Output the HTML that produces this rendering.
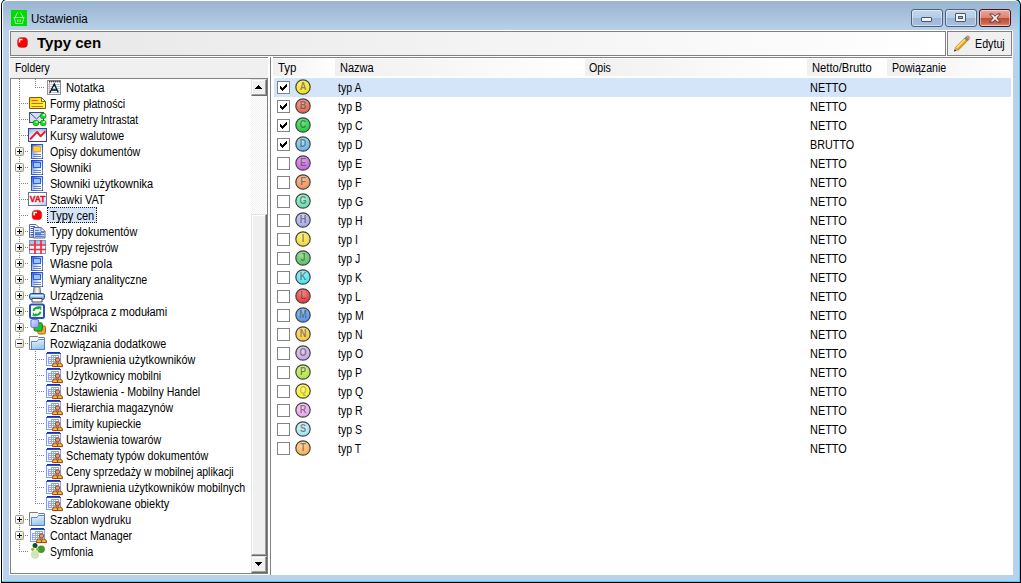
<!DOCTYPE html>
<html><head><meta charset="utf-8"><title>Ustawienia</title>
<style>
html,body{margin:0;padding:0}
body{width:1021px;height:583px;position:relative;overflow:hidden;background:#fff;font-family:"Liberation Sans",sans-serif;font-size:12px;color:#000}
div,span.t,svg{position:absolute;box-sizing:border-box}
svg{overflow:visible}
.t{white-space:nowrap;line-height:16px;transform-origin:0 50%;display:block}
.hl{height:1px;background:#828282}
.vd{width:1px;background:repeating-linear-gradient(to bottom,#808080 0,#808080 1px,transparent 1px,transparent 2px)}
.hd{height:1px;background:repeating-linear-gradient(to right,#808080 0,#808080 1px,transparent 1px,transparent 2px)}
.cb{width:13px;height:13px;border:1px solid #848484;background:#fff}
.hc{top:59px;height:17px;background:linear-gradient(to right,#f0f0f0,#fff)}
.ex{width:9px;height:9px;border:1px solid #919b81;border-radius:1.5px;background:linear-gradient(135deg,#fff 30%,#d6cfc0)}
.ex i{position:absolute;left:1px;top:3px;width:5px;height:1px;background:#000}
.ex b{position:absolute;left:3px;top:1px;width:1px;height:5px;background:#000}
.sb{width:16px;height:17px;background:#f0f0f0;border-left:1px solid #e3e3e3;border-top:1px solid #e3e3e3;border-right:1px solid #696969;border-bottom:1px solid #696969;box-shadow:inset -1px -1px 0 #a0a0a0,inset 1px 1px 0 #fff}
</style></head><body>
<div style="left:1px;top:-1px;width:1020px;height:584px;background:#000;border-radius:6px 6px 0 0"></div>
<div style="left:2px;top:0;width:1018px;height:582px;background:#48d0fc;border-radius:5px 5px 0 0"></div>
<div style="left:2px;top:0;width:1017px;height:581px;background:#fff;border-radius:5px 5px 0 0"></div>
<div style="left:3px;top:1px;width:1016px;height:580px;background:linear-gradient(to bottom,#99b4d1 0,#b9d1ea 30px,#b9d1ea 100%);border-radius:4px 4px 0 0"></div>
<svg style="left:11px;top:10px" width="16" height="16" viewBox="0 0 16 16"><rect width="16" height="16" fill="#00dc00"/><g fill="none" stroke="#9df59d" stroke-width="1"><path d="M2.5 7.5h11M3.5 8l1 5.5h7l1-5.5M4 7.5L6.5 2.5M12 7.5L9.500 2.500"/><path d="M6.500 9.500v2.500M8 9.500v2.500M9.500 9.500v2.500" stroke-width="0.9"/></g></svg>
<span class="t" style="left:31.4px;top:10.84px;font-size:12px;color:#000;transform:scaleX(0.9659);">Ustawienia</span>
<div style="left:911px;top:9px;width:32px;height:18px;border:1px solid #4f5f7d;border-radius:3px;background:linear-gradient(to bottom,#c3d6ec 0,#b6cde8 47%,#9bb7d8 50%,#a6c0df 100%);box-shadow:inset 0 0 0 1px rgba(255,255,255,.45)"><div style="left:9px;top:7px;width:11px;height:5px;border:1px solid #4a556f;border-radius:1px;background:#f4f4f4"></div></div>
<div style="left:945px;top:9px;width:32px;height:18px;border:1px solid #4f5f7d;border-radius:3px;background:linear-gradient(to bottom,#c3d6ec 0,#b6cde8 47%,#9bb7d8 50%,#a6c0df 100%);box-shadow:inset 0 0 0 1px rgba(255,255,255,.45)"><div style="left:9px;top:3px;width:11px;height:9px;border:1px solid #4a556f;border-radius:1px;background:#f4f4f4"><div style="left:2px;top:2px;width:5px;height:3px;border:1px solid #4a556f;background:#9db8d8"></div></div></div>
<div style="left:979px;top:9px;width:32px;height:18px;border:1px solid #431422;border-radius:3px;background:linear-gradient(to bottom,#e9a99c 0,#dc8474 47%,#c2482c 50%,#cb6a52 85%,#dc9585 100%);box-shadow:inset 0 0 0 1px rgba(255,255,255,.45)"><svg style="left:8px;top:3px" width="14" height="10" viewBox="0 0 14 10"><path d="M1.600 1h3.200L7 3.300 9.200 1h3.200L8.800 5l3.600 4H9.200L7 6.700 4.800 9H1.600L5.200 5z" fill="#f6f2f2" stroke="#633030" stroke-width="1" stroke-linejoin="round"/></svg></div>
<div style="left:9px;top:30px;width:1004px;height:545px;background:#fff"></div>
<div style="left:10px;top:31px;width:936px;height:25px;border:1px solid #808080;background:linear-gradient(to right,#e7e7e7,#ffffff)"></div>
<svg style="left:17px;top:37px" width="11" height="11" viewBox="0 0 11 11"><rect x="0.500" y="0.500" width="10" height="10" rx="3.500" fill="#ff0000" stroke="#8a3030" stroke-width="0.6" stroke-opacity=".6"/><path d="M1.800 5.500V1.800h3.700v1.400H3.200v2.300z" fill="#fff"/></svg>
<span class="t" style="left:37.0px;top:35.15px;font-size:14px;font-weight:bold;color:#000;transform:scaleX(1.0762);">Typy cen</span>
<div style="left:947px;top:31px;width:65px;height:25px;border:1px solid #808080;background:#f0f0f0"></div>
<svg style="left:953px;top:35px" width="18" height="18" viewBox="0 0 18 18"><path d="M1 16.600L2 13.200 4.400 15.600z" fill="#1a1a1a"/><path d="M1.700 14.200L2.400 12.400 5.200 15.200 3.400 15.900z" fill="#d9b380"/><path d="M2.400 12.400L11.600 3.200 14.400 6 5.200 15.200z" fill="#f0b02a" stroke="#b87a18" stroke-width=".8"/><path d="M3.300 13L12.300 4" stroke="#fbe38c" stroke-width="1.200"/><path d="M4.900 14.600L13.900 5.600" stroke="#d4901c" stroke-width="1"/><path d="M11.600 3.200l1.700-1.700 2.800 2.800-1.700 1.700z" fill="#6d9870" stroke="#4f7a55" stroke-width=".5"/><path d="M13.300 1.500l1-1q.5-.4 1 0l1.800 1.800q.4.500 0 1l-1 1z" fill="#ee7f86"/></svg>
<span class="t" style="left:975.4px;top:35.84px;font-size:12px;color:#000;transform:scaleX(0.8903);">Edytuj</span>
<div class="hl" style="left:10px;top:57px;width:258px"></div>
<div class="hl" style="left:273px;top:57px;width:739px"></div>
<div style="left:270px;top:57px;width:1px;height:518px;background:#808080"></div>
<div style="left:10px;top:59px;width:258px;height:19px;background:#f0f0f0"></div>
<span class="t" style="left:15.4px;top:59.84px;font-size:12px;color:#000;transform:scaleX(0.8647);">Foldery</span>
<div style="left:10px;top:78px;width:258px;height:496px;border:1px solid #828282;background:#fff"></div>
<svg width="0" height="0" style="left:0;top:0"><defs><linearGradient id="dg" x1="0" y1="0" x2="1" y2="1"><stop offset="0" stop-color="#1a3fb4"/><stop offset=".7" stop-color="#3f68d8"/><stop offset="1" stop-color="#8a96b4"/></linearGradient><linearGradient id="dw" x1="0" y1="0" x2="1" y2="1"><stop offset="0" stop-color="#2f66e6"/><stop offset=".75" stop-color="#ffffff"/></linearGradient><linearGradient id="fy" x1="0" y1="0" x2="1" y2="1"><stop offset="0" stop-color="#ffc61a"/><stop offset=".5" stop-color="#fff21a"/><stop offset="1" stop-color="#fff76a"/></linearGradient><radialGradient id="kg" cx=".55" cy=".8" r=".9"><stop offset="0" stop-color="#ffffff"/><stop offset=".45" stop-color="#f0f5ff"/><stop offset="1" stop-color="#8fa8ee"/></radialGradient><linearGradient id="vg" x1="0" y1="0" x2="1" y2="1"><stop offset=".55" stop-color="#ffffff"/><stop offset="1" stop-color="#a9c0f2"/></linearGradient><linearGradient id="pp" x1="0" y1="0" x2="1" y2="0"><stop offset="0" stop-color="#8a8a8a"/><stop offset=".5" stop-color="#ffffff"/><stop offset="1" stop-color="#9a9a9a"/></linearGradient><linearGradient id="mb" x1="0" y1="0" x2="1" y2="1"><stop offset="0" stop-color="#dfe4ff"/><stop offset="1" stop-color="#8f9cf0"/></linearGradient><linearGradient id="fg" x1="0" y1="0" x2="0.300" y2="1"><stop offset="0" stop-color="#f4faff"/><stop offset=".45" stop-color="#c4e2f8"/><stop offset="1" stop-color="#98c8ee"/></linearGradient><radialGradient id="gA" cx=".45" cy=".3" r=".75"><stop offset="0" stop-color="#fff27a"/><stop offset="1" stop-color="#f5d90e"/></radialGradient><radialGradient id="gB" cx=".45" cy=".3" r=".75"><stop offset="0" stop-color="#f8a898"/><stop offset="1" stop-color="#e05846"/></radialGradient><radialGradient id="gC" cx=".45" cy=".3" r=".75"><stop offset="0" stop-color="#6cec7e"/><stop offset="1" stop-color="#19c23a"/></radialGradient><radialGradient id="gD" cx=".45" cy=".3" r=".75"><stop offset="0" stop-color="#b0e0f8"/><stop offset="1" stop-color="#54aee2"/></radialGradient><radialGradient id="gE" cx=".45" cy=".3" r=".75"><stop offset="0" stop-color="#e9a2f2"/><stop offset="1" stop-color="#c05ada"/></radialGradient><radialGradient id="gF" cx=".45" cy=".3" r=".75"><stop offset="0" stop-color="#f8c4a0"/><stop offset="1" stop-color="#ea884c"/></radialGradient><radialGradient id="gG" cx=".45" cy=".3" r=".75"><stop offset="0" stop-color="#b0f4d8"/><stop offset="1" stop-color="#5adaa6"/></radialGradient><radialGradient id="gH" cx=".45" cy=".3" r=".75"><stop offset="0" stop-color="#d0d2f8"/><stop offset="1" stop-color="#a0a2e8"/></radialGradient><radialGradient id="gI" cx=".45" cy=".3" r=".75"><stop offset="0" stop-color="#fbf08a"/><stop offset="1" stop-color="#f0d629"/></radialGradient><radialGradient id="gJ" cx=".45" cy=".3" r=".75"><stop offset="0" stop-color="#9be29b"/><stop offset="1" stop-color="#4cbd5b"/></radialGradient><radialGradient id="gK" cx=".45" cy=".3" r=".75"><stop offset="0" stop-color="#a0f4f8"/><stop offset="1" stop-color="#3cdcec"/></radialGradient><radialGradient id="gL" cx=".45" cy=".3" r=".75"><stop offset="0" stop-color="#f78a8a"/><stop offset="1" stop-color="#e62a2a"/></radialGradient><radialGradient id="gM" cx=".45" cy=".3" r=".75"><stop offset="0" stop-color="#9ccaf8"/><stop offset="1" stop-color="#3f8ce8"/></radialGradient><radialGradient id="gN" cx=".45" cy=".3" r=".75"><stop offset="0" stop-color="#fde28a"/><stop offset="1" stop-color="#f8c42c"/></radialGradient><radialGradient id="gO" cx=".45" cy=".3" r=".75"><stop offset="0" stop-color="#e6d2f5"/><stop offset="1" stop-color="#c3a0e6"/></radialGradient><radialGradient id="gP" cx=".45" cy=".3" r=".75"><stop offset="0" stop-color="#dcf58a"/><stop offset="1" stop-color="#a6e23c"/></radialGradient><radialGradient id="gQ" cx=".45" cy=".3" r=".75"><stop offset="0" stop-color="#fff87a"/><stop offset="1" stop-color="#f5ee1e"/></radialGradient><radialGradient id="gR" cx=".45" cy=".3" r=".75"><stop offset="0" stop-color="#f8d0f8"/><stop offset="1" stop-color="#e89cea"/></radialGradient><radialGradient id="gS" cx=".45" cy=".3" r=".75"><stop offset="0" stop-color="#d4f6f8"/><stop offset="1" stop-color="#96e0ea"/></radialGradient><radialGradient id="gT" cx=".45" cy=".3" r=".75"><stop offset="0" stop-color="#fcd8a0"/><stop offset="1" stop-color="#f4aa44"/></radialGradient></defs></svg>
<div class="vd" style="left:19px;top:79px;height:473px"></div>
<div class="vd" style="left:35px;top:79px;height:9px"></div>
<div class="vd" style="left:35px;top:351px;height:153px"></div>
<div class="hd" style="left:37px;top:87px;width:8px"></div>
<svg style="left:45px;top:80px" width="18" height="16" viewBox="0 0 18 16"><rect x="2.500" y="0.500" width="13" height="14" fill="#fff" stroke="#8f8f8f"/><path d="M3 4.500h12M3 6.500h12M3 8.500h12M3 10.500h12M3 12.500h12" stroke="#a9cbf0" stroke-width="1"/><path d="M4.500 1v13" stroke="#f0a898" stroke-width="1"/><path d="M4 1l.75 1.500.75-1.500zM6 1l.75 1.500.75-1.500zM8 1l.75 1.500.75-1.500zM10 1l.75 1.500.75-1.500zM12 1l.75 1.500.75-1.500zM14 1l.5 1.500.5-1.500z" fill="#333" stroke="#333" stroke-width=".4"/><path d="M5 12.500L9.300 4l3.700 8M6.300 10h5.700" fill="none" stroke="#111" stroke-width="1.300" stroke-linecap="round"/></svg>
<span class="t" style="left:66.4px;top:79.84px;font-size:12px;color:#000;transform:scaleX(0.9333);">Notatka</span>
<div class="hd" style="left:21px;top:103px;width:8px"></div>
<svg style="left:29px;top:96px" width="18" height="16" viewBox="0 0 18 16"><path d="M0.500 1.500h12l4 4v7h-16z" fill="url(#fy)" stroke="#6f5f10"/><path d="M12.500 1.500v4h4z" fill="#fff" stroke="#6f5f10" stroke-width=".9"/><path d="M2.500 4.500h6.500M2.500 7.500h11.500M2.500 10.500h11.500" stroke="#f0581a" stroke-width="1"/></svg>
<span class="t" style="left:50.4px;top:95.84px;font-size:12px;color:#000;transform:scaleX(0.8878);">Formy płatności</span>
<div class="hd" style="left:21px;top:119px;width:8px"></div>
<svg style="left:29px;top:112px" width="18" height="16" viewBox="0 0 18 16"><rect x="0.500" y="0.500" width="14" height="10" fill="#d4e0fa" stroke="#3f4f80"/><path d="M0.500 0.500l7 6.500 7-6.500" fill="none" stroke="#3f4f80"/><rect x="11.500" y="1.400" width="5.400" height="5" rx="1.600" fill="#0ae80a" stroke="#0a8a0a" stroke-width=".7"/><rect x="4.200" y="8.500" width="5.400" height="5" rx="1.600" fill="#0ae80a" stroke="#0a8a0a" stroke-width=".7"/><rect x="11.500" y="8.500" width="5.400" height="5" rx="1.600" fill="#0ae80a" stroke="#0a8a0a" stroke-width=".7"/><rect x="13.800" y="2" width="2.200" height="2" rx=".6" fill="#e8ffe8"/><rect x="6.500" y="9.100" width="2.200" height="2" rx=".6" fill="#e8ffe8" fill-opacity=".8"/><rect x="13.800" y="9.100" width="2.200" height="2" rx=".6" fill="#e8ffe8"/></svg>
<span class="t" style="left:50.4px;top:111.84px;font-size:12px;color:#000;transform:scaleX(0.8643);">Parametry Intrastat</span>
<div class="hd" style="left:21px;top:135px;width:8px"></div>
<svg style="left:29px;top:128px" width="18" height="16" viewBox="0 0 18 16"><rect x="-.5" y="0.500" width="18" height="13" fill="url(#kg)" stroke="#36467a"/><path d="M1.600 10.700L8.100 3.900l3.400 4.300 4.300-4.300" fill="none" stroke="#ee1c24" stroke-width="2" stroke-linecap="round" stroke-linejoin="round"/></svg>
<span class="t" style="left:50.4px;top:127.84px;font-size:12px;color:#000;transform:scaleX(0.8828);">Kursy walutowe</span>
<div class="hd" style="left:25px;top:151px;width:4px"></div>
<div class="ex" style="left:15px;top:147px"><i></i><b></b></div>
<svg style="left:29px;top:144px" width="18" height="16" viewBox="0 0 18 16"><rect x="2" y="0" width="12" height="15" fill="url(#dg)"/><rect x="3" y="1" width="10" height="13" fill="url(#dw)"/><rect x="4" y="2" width="8" height="6" fill="#f5a81c"/><rect x="5" y="3" width="6" height="4" fill="#ffd23a"/><rect x="4" y="10" width="8" height="1" fill="#6a86c8"/><rect x="4" y="12" width="8" height="1" fill="#6a86c8"/><rect x="13" y="14" width="1" height="1" fill="#333"/></svg>
<span class="t" style="left:50.4px;top:143.84px;font-size:12px;color:#000;transform:scaleX(0.8839);">Opisy dokumentów</span>
<div class="hd" style="left:25px;top:167px;width:4px"></div>
<div class="ex" style="left:15px;top:163px"><i></i><b></b></div>
<svg style="left:29px;top:160px" width="18" height="16" viewBox="0 0 18 16"><rect x="2" y="0" width="12" height="15" fill="url(#dg)"/><rect x="3" y="1" width="10" height="13" fill="url(#dw)"/><rect x="4" y="2" width="8" height="6" fill="#2f62d8"/><rect x="5" y="3" width="6" height="4" fill="#9cc4f8"/><rect x="4" y="10" width="8" height="1" fill="#6a86c8"/><rect x="4" y="12" width="8" height="1" fill="#6a86c8"/><rect x="13" y="14" width="1" height="1" fill="#333"/></svg>
<span class="t" style="left:50.4px;top:159.84px;font-size:12px;color:#000;transform:scaleX(0.9360);">Słowniki</span>
<div class="hd" style="left:21px;top:183px;width:8px"></div>
<svg style="left:29px;top:176px" width="18" height="16" viewBox="0 0 18 16"><rect x="2" y="0" width="12" height="15" fill="url(#dg)"/><rect x="3" y="1" width="10" height="13" fill="url(#dw)"/><rect x="4" y="2" width="8" height="6" fill="#2f62d8"/><rect x="5" y="3" width="6" height="4" fill="#9cc4f8"/><rect x="4" y="10" width="8" height="1" fill="#6a86c8"/><rect x="4" y="12" width="8" height="1" fill="#6a86c8"/><rect x="13" y="14" width="1" height="1" fill="#333"/></svg>
<span class="t" style="left:50.4px;top:175.84px;font-size:12px;color:#000;transform:scaleX(0.9156);">Słowniki użytkownika</span>
<div class="hd" style="left:21px;top:199px;width:8px"></div>
<svg style="left:29px;top:192px" width="18" height="16" viewBox="0 0 18 16"><rect x="-.5" y="0.500" width="18" height="13" fill="url(#vg)" stroke="#66759f"/><text x="8.500" y="10.300" text-anchor="middle" font-family="Liberation Sans" font-weight="bold" font-size="9.600" fill="#e01020" stroke="#e01020" stroke-width=".45" textLength="15.500" lengthAdjust="spacingAndGlyphs">VAT</text></svg>
<span class="t" style="left:50.4px;top:191.84px;font-size:12px;color:#000;transform:scaleX(0.9081);">Stawki VAT</span>
<div class="hd" style="left:21px;top:215px;width:8px"></div>
<svg style="left:29px;top:208px" width="18" height="16" viewBox="0 0 18 16"><rect x="3.100" y="2.200" width="9.600" height="9.600" rx="3.500" fill="#ff0000" stroke="#a03030" stroke-width=".6" stroke-opacity=".6"/><path d="M4.400 7.400V3.800h3.600v1.400H5.900v2.200z" fill="#fff"/></svg>
<div style="left:47px;top:207px;width:50px;height:16px;background:#d4e5fa;border:1px dotted #1c1c1c"></div>
<span class="t" style="left:50.4px;top:207.84px;font-size:12px;color:#000;transform:scaleX(0.9202);">Typy cen</span>
<div class="hd" style="left:25px;top:231px;width:4px"></div>
<div class="ex" style="left:15px;top:227px"><i></i><b></b></div>
<svg style="left:29px;top:224px" width="18" height="16" viewBox="0 0 18 16"><path d="M0.500 0.500h6.500l3 3v10h-9.500z" fill="#f4f8ff" stroke="#5b6b9d"/><path d="M1.500 2.500h4.500M1.500 4.500h3M1.500 6.500h3M1.500 8.500h3M1.500 10.500h3M1.500 12h3" stroke="#3f63c4" stroke-width="1"/><path d="M4.500 3.500h7.500l4 4v6.500h-11.500z" fill="#cfdcf6" stroke="#5b6b9d"/><path d="M12 3.500v4h4z" fill="#fff" stroke="#5b6b9d" stroke-width=".8"/><path d="M6 6.500h4M6 8.500h9M6 10.500h9M6 12.500h9" stroke="#5f83d8" stroke-width="1.200"/><rect x="6" y="9" width="6" height="2.500" fill="#3f63c4" fill-opacity=".7"/></svg>
<span class="t" style="left:50.4px;top:223.84px;font-size:12px;color:#000;transform:scaleX(0.9016);">Typy dokumentów</span>
<div class="hd" style="left:25px;top:247px;width:4px"></div>
<div class="ex" style="left:15px;top:243px"><i></i><b></b></div>
<svg style="left:29px;top:240px" width="18" height="16" viewBox="0 0 18 16"><rect x="0.500" y="0.500" width="16" height="13" fill="#eef4ff" stroke="#8494c4"/><rect x="1" y="1" width="15" height="3.500" fill="#a6c4f4"/><path d="M0 5h17M0 9.500h17M6 0v14M12 0v14" stroke="#ea3038" stroke-width="1.700"/></svg>
<span class="t" style="left:50.4px;top:239.84px;font-size:12px;color:#000;transform:scaleX(0.8816);">Typy rejestrów</span>
<div class="hd" style="left:25px;top:263px;width:4px"></div>
<div class="ex" style="left:15px;top:259px"><i></i><b></b></div>
<svg style="left:29px;top:256px" width="18" height="16" viewBox="0 0 18 16"><rect x="2" y="0" width="12" height="15" fill="url(#dg)"/><rect x="3" y="1" width="10" height="13" fill="url(#dw)"/><rect x="4" y="2" width="8" height="6" fill="#2f62d8"/><rect x="5" y="3" width="6" height="4" fill="#9cc4f8"/><rect x="4" y="10" width="8" height="1" fill="#6a86c8"/><rect x="4" y="12" width="8" height="1" fill="#6a86c8"/><rect x="13" y="14" width="1" height="1" fill="#333"/></svg>
<span class="t" style="left:50.4px;top:255.84px;font-size:12px;color:#000;transform:scaleX(0.9418);">Własne pola</span>
<div class="hd" style="left:25px;top:279px;width:4px"></div>
<div class="ex" style="left:15px;top:275px"><i></i><b></b></div>
<svg style="left:29px;top:272px" width="18" height="16" viewBox="0 0 18 16"><rect x="2" y="0" width="12" height="15" fill="url(#dg)"/><rect x="3" y="1" width="10" height="13" fill="url(#dw)"/><rect x="4" y="2" width="8" height="6" fill="#2f62d8"/><rect x="5" y="3" width="6" height="4" fill="#9cc4f8"/><rect x="4" y="10" width="8" height="1" fill="#6a86c8"/><rect x="4" y="12" width="8" height="1" fill="#6a86c8"/><rect x="13" y="14" width="1" height="1" fill="#333"/></svg>
<span class="t" style="left:50.4px;top:271.84px;font-size:12px;color:#000;transform:scaleX(0.8843);">Wymiary analityczne</span>
<div class="hd" style="left:25px;top:295px;width:4px"></div>
<div class="ex" style="left:15px;top:291px"><i></i><b></b></div>
<svg style="left:29px;top:288px" width="18" height="16" viewBox="0 0 18 16"><path d="M5 -1h6l.8 7H4.200z" fill="url(#pp)" stroke="#6a6a6a" stroke-width=".8"/><rect x="0.500" y="5.500" width="15" height="6" rx="2" fill="#7fb0ee" stroke="#26488f"/><rect x="2" y="7" width="12" height="1.600" fill="#e4f0ff"/><path d="M3 10.500h10v3.500H3z" fill="#fff" stroke="#333" stroke-width=".9"/></svg>
<span class="t" style="left:50.4px;top:287.84px;font-size:12px;color:#000;transform:scaleX(0.8764);">Urządzenia</span>
<div class="hd" style="left:25px;top:311px;width:4px"></div>
<div class="ex" style="left:15px;top:307px"><i></i><b></b></div>
<svg style="left:29px;top:304px" width="18" height="16" viewBox="0 0 18 16"><rect x="1" y="0.600" width="14" height="13.400" rx="1.800" fill="#fff" stroke="#2f4fbf" stroke-width="2"/><path d="M4.600 7A3.600 3.600 0 0 1 10.300 4.400" fill="none" stroke="#12b032" stroke-width="2.100"/><path d="M9 2.400l3.200 .4-.4 3.200z" fill="#12b032" stroke="#12b032" stroke-width=".5"/><path d="M11.400 7.600A3.600 3.600 0 0 1 5.700 10.200" fill="none" stroke="#12b032" stroke-width="2.100"/><path d="M7 12.200l-3.200-.4 .4-3.200z" fill="#12b032" stroke="#12b032" stroke-width=".5"/></svg>
<span class="t" style="left:50.4px;top:303.84px;font-size:12px;color:#000;transform:scaleX(0.9153);">Współpraca z modułami</span>
<div class="hd" style="left:25px;top:327px;width:4px"></div>
<div class="ex" style="left:15px;top:323px"><i></i><b></b></div>
<svg style="left:29px;top:320px" width="18" height="16" viewBox="0 0 18 16"><rect x="8.900" y="6" width="7.600" height="8" rx="1.500" fill="#f7a43a" stroke="#b8600a"/><rect x="5" y="2.800" width="8.300" height="8.200" rx="1.600" fill="#18cc26" stroke="#0a7a12"/><rect x="1.900" y="-.4" width="7.800" height="7.800" rx="1.500" fill="url(#mb)" stroke="#5f6fcf"/></svg>
<span class="t" style="left:50.4px;top:319.84px;font-size:12px;color:#000;transform:scaleX(0.9312);">Znaczniki</span>
<div class="hd" style="left:25px;top:343px;width:4px"></div>
<div class="ex" style="left:15px;top:339px"><i></i></div>
<svg style="left:29px;top:336px" width="18" height="16" viewBox="0 0 18 16"><path d="M0.500 13.500V0.500h8l1 1h6v12z" fill="#f6f6f6" stroke="#7c7c7c"/><path d="M2.500 5.500h5.500l1.500-2h6v10h-13z" fill="url(#fg)" stroke="#5474c6" stroke-width=".9" stroke-linejoin="round"/></svg>
<span class="t" style="left:50.4px;top:335.84px;font-size:12px;color:#000;transform:scaleX(0.8978);">Rozwiązania dodatkowe</span>
<div class="hd" style="left:37px;top:359px;width:8px"></div>
<svg style="left:45px;top:352px" width="18" height="16" viewBox="0 0 18 16"><rect x="1.500" y="1.500" width="14" height="12" fill="#f6f8ff" stroke="#7f9cf2"/><rect x="2" y="0" width="13" height="1" fill="#1a2fa0"/><rect x="1" y="1" width="15" height="1" fill="#2a52d2"/><rect x="6" y="3" width="8" height="9" fill="#8ea4f2"/><rect x="3" y="5" width="3.200" height="7" fill="#8ea4f2"/><g fill="#fff"><rect x="4" y="6" width="2" height="1"/><rect x="7" y="6" width="1.200" height="1"/><rect x="9" y="6" width="1.200" height="1"/><rect x="4" y="8" width="2" height="1"/><rect x="7" y="8" width="1.200" height="1"/><rect x="9" y="8" width="1.200" height="1"/><rect x="4" y="10" width="2" height="1"/><rect x="7" y="10" width="1.200" height="1"/><rect x="9" y="10" width="1.200" height="1"/><rect x="7" y="4" width="1.200" height="1"/><rect x="9" y="4" width="1.200" height="1"/><rect x="11" y="4" width="2" height="1"/></g><path d="M7.500 14.600c-.2-2.200 1.100-3.700 2.700-3.700l2.300 1.300 2.300-1.300c1.600 0 2.900 1.500 2.700 3.700z" fill="#f4bc1a" stroke="#96280e" stroke-width=".9" stroke-linejoin="round"/><path d="M12.500 12.300v2.300" stroke="#96280e" stroke-width=".9"/><circle cx="12.550" cy="7.900" r="2.150" fill="#dfa45e" stroke="#8c4a16" stroke-width="1"/></svg>
<span class="t" style="left:66.4px;top:351.84px;font-size:12px;color:#000;transform:scaleX(0.8967);">Uprawnienia użytkowników</span>
<div class="hd" style="left:37px;top:375px;width:8px"></div>
<svg style="left:45px;top:368px" width="18" height="16" viewBox="0 0 18 16"><rect x="1.500" y="1.500" width="14" height="12" fill="#f6f8ff" stroke="#7f9cf2"/><rect x="2" y="0" width="13" height="1" fill="#1a2fa0"/><rect x="1" y="1" width="15" height="1" fill="#2a52d2"/><rect x="6" y="3" width="8" height="9" fill="#8ea4f2"/><rect x="3" y="5" width="3.200" height="7" fill="#8ea4f2"/><g fill="#fff"><rect x="4" y="6" width="2" height="1"/><rect x="7" y="6" width="1.200" height="1"/><rect x="9" y="6" width="1.200" height="1"/><rect x="4" y="8" width="2" height="1"/><rect x="7" y="8" width="1.200" height="1"/><rect x="9" y="8" width="1.200" height="1"/><rect x="4" y="10" width="2" height="1"/><rect x="7" y="10" width="1.200" height="1"/><rect x="9" y="10" width="1.200" height="1"/><rect x="7" y="4" width="1.200" height="1"/><rect x="9" y="4" width="1.200" height="1"/><rect x="11" y="4" width="2" height="1"/></g><path d="M7.500 14.600c-.2-2.200 1.100-3.700 2.700-3.700l2.300 1.300 2.300-1.300c1.600 0 2.900 1.500 2.700 3.700z" fill="#f4bc1a" stroke="#96280e" stroke-width=".9" stroke-linejoin="round"/><path d="M12.500 12.300v2.300" stroke="#96280e" stroke-width=".9"/><circle cx="12.550" cy="7.900" r="2.150" fill="#dfa45e" stroke="#8c4a16" stroke-width="1"/></svg>
<span class="t" style="left:66.4px;top:367.84px;font-size:12px;color:#000;transform:scaleX(0.8812);">Użytkownicy mobilni</span>
<div class="hd" style="left:37px;top:391px;width:8px"></div>
<svg style="left:45px;top:384px" width="18" height="16" viewBox="0 0 18 16"><rect x="1.500" y="1.500" width="14" height="12" fill="#f6f8ff" stroke="#7f9cf2"/><rect x="2" y="0" width="13" height="1" fill="#1a2fa0"/><rect x="1" y="1" width="15" height="1" fill="#2a52d2"/><rect x="6" y="3" width="8" height="9" fill="#8ea4f2"/><rect x="3" y="5" width="3.200" height="7" fill="#8ea4f2"/><g fill="#fff"><rect x="4" y="6" width="2" height="1"/><rect x="7" y="6" width="1.200" height="1"/><rect x="9" y="6" width="1.200" height="1"/><rect x="4" y="8" width="2" height="1"/><rect x="7" y="8" width="1.200" height="1"/><rect x="9" y="8" width="1.200" height="1"/><rect x="4" y="10" width="2" height="1"/><rect x="7" y="10" width="1.200" height="1"/><rect x="9" y="10" width="1.200" height="1"/><rect x="7" y="4" width="1.200" height="1"/><rect x="9" y="4" width="1.200" height="1"/><rect x="11" y="4" width="2" height="1"/></g><path d="M7.500 14.600c-.2-2.200 1.100-3.700 2.700-3.700l2.300 1.300 2.300-1.300c1.600 0 2.900 1.500 2.700 3.700z" fill="#f4bc1a" stroke="#96280e" stroke-width=".9" stroke-linejoin="round"/><path d="M12.500 12.300v2.300" stroke="#96280e" stroke-width=".9"/><circle cx="12.550" cy="7.900" r="2.150" fill="#dfa45e" stroke="#8c4a16" stroke-width="1"/></svg>
<span class="t" style="left:66.4px;top:383.84px;font-size:12px;color:#000;transform:scaleX(0.8824);">Ustawienia - Mobilny Handel</span>
<div class="hd" style="left:37px;top:407px;width:8px"></div>
<svg style="left:45px;top:400px" width="18" height="16" viewBox="0 0 18 16"><rect x="1.500" y="1.500" width="14" height="12" fill="#f6f8ff" stroke="#7f9cf2"/><rect x="2" y="0" width="13" height="1" fill="#1a2fa0"/><rect x="1" y="1" width="15" height="1" fill="#2a52d2"/><rect x="6" y="3" width="8" height="9" fill="#8ea4f2"/><rect x="3" y="5" width="3.200" height="7" fill="#8ea4f2"/><g fill="#fff"><rect x="4" y="6" width="2" height="1"/><rect x="7" y="6" width="1.200" height="1"/><rect x="9" y="6" width="1.200" height="1"/><rect x="4" y="8" width="2" height="1"/><rect x="7" y="8" width="1.200" height="1"/><rect x="9" y="8" width="1.200" height="1"/><rect x="4" y="10" width="2" height="1"/><rect x="7" y="10" width="1.200" height="1"/><rect x="9" y="10" width="1.200" height="1"/><rect x="7" y="4" width="1.200" height="1"/><rect x="9" y="4" width="1.200" height="1"/><rect x="11" y="4" width="2" height="1"/></g><path d="M7.500 14.600c-.2-2.200 1.100-3.700 2.700-3.700l2.300 1.300 2.300-1.300c1.600 0 2.900 1.500 2.700 3.700z" fill="#f4bc1a" stroke="#96280e" stroke-width=".9" stroke-linejoin="round"/><path d="M12.500 12.300v2.300" stroke="#96280e" stroke-width=".9"/><circle cx="12.550" cy="7.900" r="2.150" fill="#dfa45e" stroke="#8c4a16" stroke-width="1"/></svg>
<span class="t" style="left:66.4px;top:399.84px;font-size:12px;color:#000;transform:scaleX(0.8782);">Hierarchia magazynów</span>
<div class="hd" style="left:37px;top:423px;width:8px"></div>
<svg style="left:45px;top:416px" width="18" height="16" viewBox="0 0 18 16"><rect x="1.500" y="1.500" width="14" height="12" fill="#f6f8ff" stroke="#7f9cf2"/><rect x="2" y="0" width="13" height="1" fill="#1a2fa0"/><rect x="1" y="1" width="15" height="1" fill="#2a52d2"/><rect x="6" y="3" width="8" height="9" fill="#8ea4f2"/><rect x="3" y="5" width="3.200" height="7" fill="#8ea4f2"/><g fill="#fff"><rect x="4" y="6" width="2" height="1"/><rect x="7" y="6" width="1.200" height="1"/><rect x="9" y="6" width="1.200" height="1"/><rect x="4" y="8" width="2" height="1"/><rect x="7" y="8" width="1.200" height="1"/><rect x="9" y="8" width="1.200" height="1"/><rect x="4" y="10" width="2" height="1"/><rect x="7" y="10" width="1.200" height="1"/><rect x="9" y="10" width="1.200" height="1"/><rect x="7" y="4" width="1.200" height="1"/><rect x="9" y="4" width="1.200" height="1"/><rect x="11" y="4" width="2" height="1"/></g><path d="M7.500 14.600c-.2-2.200 1.100-3.700 2.700-3.700l2.300 1.300 2.300-1.300c1.600 0 2.900 1.500 2.700 3.700z" fill="#f4bc1a" stroke="#96280e" stroke-width=".9" stroke-linejoin="round"/><path d="M12.500 12.300v2.300" stroke="#96280e" stroke-width=".9"/><circle cx="12.550" cy="7.900" r="2.150" fill="#dfa45e" stroke="#8c4a16" stroke-width="1"/></svg>
<span class="t" style="left:66.4px;top:415.84px;font-size:12px;color:#000;transform:scaleX(0.8878);">Limity kupieckie</span>
<div class="hd" style="left:37px;top:439px;width:8px"></div>
<svg style="left:45px;top:432px" width="18" height="16" viewBox="0 0 18 16"><rect x="1.500" y="1.500" width="14" height="12" fill="#f6f8ff" stroke="#7f9cf2"/><rect x="2" y="0" width="13" height="1" fill="#1a2fa0"/><rect x="1" y="1" width="15" height="1" fill="#2a52d2"/><rect x="6" y="3" width="8" height="9" fill="#8ea4f2"/><rect x="3" y="5" width="3.200" height="7" fill="#8ea4f2"/><g fill="#fff"><rect x="4" y="6" width="2" height="1"/><rect x="7" y="6" width="1.200" height="1"/><rect x="9" y="6" width="1.200" height="1"/><rect x="4" y="8" width="2" height="1"/><rect x="7" y="8" width="1.200" height="1"/><rect x="9" y="8" width="1.200" height="1"/><rect x="4" y="10" width="2" height="1"/><rect x="7" y="10" width="1.200" height="1"/><rect x="9" y="10" width="1.200" height="1"/><rect x="7" y="4" width="1.200" height="1"/><rect x="9" y="4" width="1.200" height="1"/><rect x="11" y="4" width="2" height="1"/></g><path d="M7.500 14.600c-.2-2.200 1.100-3.700 2.700-3.700l2.300 1.300 2.300-1.300c1.600 0 2.900 1.500 2.700 3.700z" fill="#f4bc1a" stroke="#96280e" stroke-width=".9" stroke-linejoin="round"/><path d="M12.500 12.300v2.300" stroke="#96280e" stroke-width=".9"/><circle cx="12.550" cy="7.900" r="2.150" fill="#dfa45e" stroke="#8c4a16" stroke-width="1"/></svg>
<span class="t" style="left:66.4px;top:431.84px;font-size:12px;color:#000;transform:scaleX(0.8921);">Ustawienia towarów</span>
<div class="hd" style="left:37px;top:455px;width:8px"></div>
<svg style="left:45px;top:448px" width="18" height="16" viewBox="0 0 18 16"><rect x="1.500" y="1.500" width="14" height="12" fill="#f6f8ff" stroke="#7f9cf2"/><rect x="2" y="0" width="13" height="1" fill="#1a2fa0"/><rect x="1" y="1" width="15" height="1" fill="#2a52d2"/><rect x="6" y="3" width="8" height="9" fill="#8ea4f2"/><rect x="3" y="5" width="3.200" height="7" fill="#8ea4f2"/><g fill="#fff"><rect x="4" y="6" width="2" height="1"/><rect x="7" y="6" width="1.200" height="1"/><rect x="9" y="6" width="1.200" height="1"/><rect x="4" y="8" width="2" height="1"/><rect x="7" y="8" width="1.200" height="1"/><rect x="9" y="8" width="1.200" height="1"/><rect x="4" y="10" width="2" height="1"/><rect x="7" y="10" width="1.200" height="1"/><rect x="9" y="10" width="1.200" height="1"/><rect x="7" y="4" width="1.200" height="1"/><rect x="9" y="4" width="1.200" height="1"/><rect x="11" y="4" width="2" height="1"/></g><path d="M7.500 14.600c-.2-2.200 1.100-3.700 2.700-3.700l2.300 1.300 2.300-1.300c1.600 0 2.900 1.500 2.700 3.700z" fill="#f4bc1a" stroke="#96280e" stroke-width=".9" stroke-linejoin="round"/><path d="M12.500 12.300v2.300" stroke="#96280e" stroke-width=".9"/><circle cx="12.550" cy="7.900" r="2.150" fill="#dfa45e" stroke="#8c4a16" stroke-width="1"/></svg>
<span class="t" style="left:66.4px;top:447.84px;font-size:12px;color:#000;transform:scaleX(0.8920);">Schematy typów dokumentów</span>
<div class="hd" style="left:37px;top:471px;width:8px"></div>
<svg style="left:45px;top:464px" width="18" height="16" viewBox="0 0 18 16"><rect x="1.500" y="1.500" width="14" height="12" fill="#f6f8ff" stroke="#7f9cf2"/><rect x="2" y="0" width="13" height="1" fill="#1a2fa0"/><rect x="1" y="1" width="15" height="1" fill="#2a52d2"/><rect x="6" y="3" width="8" height="9" fill="#8ea4f2"/><rect x="3" y="5" width="3.200" height="7" fill="#8ea4f2"/><g fill="#fff"><rect x="4" y="6" width="2" height="1"/><rect x="7" y="6" width="1.200" height="1"/><rect x="9" y="6" width="1.200" height="1"/><rect x="4" y="8" width="2" height="1"/><rect x="7" y="8" width="1.200" height="1"/><rect x="9" y="8" width="1.200" height="1"/><rect x="4" y="10" width="2" height="1"/><rect x="7" y="10" width="1.200" height="1"/><rect x="9" y="10" width="1.200" height="1"/><rect x="7" y="4" width="1.200" height="1"/><rect x="9" y="4" width="1.200" height="1"/><rect x="11" y="4" width="2" height="1"/></g><path d="M7.500 14.600c-.2-2.200 1.100-3.700 2.700-3.700l2.300 1.300 2.300-1.300c1.600 0 2.900 1.500 2.700 3.700z" fill="#f4bc1a" stroke="#96280e" stroke-width=".9" stroke-linejoin="round"/><path d="M12.500 12.300v2.300" stroke="#96280e" stroke-width=".9"/><circle cx="12.550" cy="7.900" r="2.150" fill="#dfa45e" stroke="#8c4a16" stroke-width="1"/></svg>
<span class="t" style="left:66.4px;top:463.84px;font-size:12px;color:#000;transform:scaleX(0.8730);">Ceny sprzedaży w mobilnej aplikacji</span>
<div class="hd" style="left:37px;top:487px;width:8px"></div>
<svg style="left:45px;top:480px" width="18" height="16" viewBox="0 0 18 16"><rect x="1.500" y="1.500" width="14" height="12" fill="#f6f8ff" stroke="#7f9cf2"/><rect x="2" y="0" width="13" height="1" fill="#1a2fa0"/><rect x="1" y="1" width="15" height="1" fill="#2a52d2"/><rect x="6" y="3" width="8" height="9" fill="#8ea4f2"/><rect x="3" y="5" width="3.200" height="7" fill="#8ea4f2"/><g fill="#fff"><rect x="4" y="6" width="2" height="1"/><rect x="7" y="6" width="1.200" height="1"/><rect x="9" y="6" width="1.200" height="1"/><rect x="4" y="8" width="2" height="1"/><rect x="7" y="8" width="1.200" height="1"/><rect x="9" y="8" width="1.200" height="1"/><rect x="4" y="10" width="2" height="1"/><rect x="7" y="10" width="1.200" height="1"/><rect x="9" y="10" width="1.200" height="1"/><rect x="7" y="4" width="1.200" height="1"/><rect x="9" y="4" width="1.200" height="1"/><rect x="11" y="4" width="2" height="1"/></g><path d="M7.500 14.600c-.2-2.200 1.100-3.700 2.700-3.700l2.300 1.300 2.300-1.300c1.600 0 2.900 1.500 2.700 3.700z" fill="#f4bc1a" stroke="#96280e" stroke-width=".9" stroke-linejoin="round"/><path d="M12.500 12.300v2.300" stroke="#96280e" stroke-width=".9"/><circle cx="12.550" cy="7.900" r="2.150" fill="#dfa45e" stroke="#8c4a16" stroke-width="1"/></svg>
<span class="t" style="left:66.4px;top:479.84px;font-size:12px;color:#000;transform:scaleX(0.8897);">Uprawnienia użytkowników mobilnych</span>
<div class="hd" style="left:37px;top:503px;width:8px"></div>
<svg style="left:45px;top:496px" width="18" height="16" viewBox="0 0 18 16"><rect x="1.500" y="1.500" width="14" height="12" fill="#f6f8ff" stroke="#7f9cf2"/><rect x="2" y="0" width="13" height="1" fill="#1a2fa0"/><rect x="1" y="1" width="15" height="1" fill="#2a52d2"/><rect x="6" y="3" width="8" height="9" fill="#8ea4f2"/><rect x="3" y="5" width="3.200" height="7" fill="#8ea4f2"/><g fill="#fff"><rect x="4" y="6" width="2" height="1"/><rect x="7" y="6" width="1.200" height="1"/><rect x="9" y="6" width="1.200" height="1"/><rect x="4" y="8" width="2" height="1"/><rect x="7" y="8" width="1.200" height="1"/><rect x="9" y="8" width="1.200" height="1"/><rect x="4" y="10" width="2" height="1"/><rect x="7" y="10" width="1.200" height="1"/><rect x="9" y="10" width="1.200" height="1"/><rect x="7" y="4" width="1.200" height="1"/><rect x="9" y="4" width="1.200" height="1"/><rect x="11" y="4" width="2" height="1"/></g><path d="M7.500 14.600c-.2-2.200 1.100-3.700 2.700-3.700l2.300 1.300 2.300-1.300c1.600 0 2.900 1.500 2.700 3.700z" fill="#f4bc1a" stroke="#96280e" stroke-width=".9" stroke-linejoin="round"/><path d="M12.500 12.300v2.300" stroke="#96280e" stroke-width=".9"/><circle cx="12.550" cy="7.900" r="2.150" fill="#dfa45e" stroke="#8c4a16" stroke-width="1"/></svg>
<span class="t" style="left:66.4px;top:495.84px;font-size:12px;color:#000;transform:scaleX(0.9154);">Zablokowane obiekty</span>
<div class="hd" style="left:25px;top:519px;width:4px"></div>
<div class="ex" style="left:15px;top:515px"><i></i><b></b></div>
<svg style="left:29px;top:512px" width="18" height="16" viewBox="0 0 18 16"><path d="M0.500 13.500V0.500h8l1 1h6v12z" fill="#f6f6f6" stroke="#7c7c7c"/><path d="M2.500 5.500h5.500l1.500-2h6v10h-13z" fill="url(#fg)" stroke="#5474c6" stroke-width=".9" stroke-linejoin="round"/></svg>
<span class="t" style="left:50.4px;top:511.84px;font-size:12px;color:#000;transform:scaleX(0.8885);">Szablon wydruku</span>
<div class="hd" style="left:25px;top:535px;width:4px"></div>
<div class="ex" style="left:15px;top:531px"><i></i><b></b></div>
<svg style="left:29px;top:528px" width="18" height="16" viewBox="0 0 18 16"><rect x="1.500" y="1.500" width="14" height="12" fill="#f6f8ff" stroke="#7f9cf2"/><rect x="2" y="0" width="13" height="1" fill="#1a2fa0"/><rect x="1" y="1" width="15" height="1" fill="#2a52d2"/><rect x="6" y="3" width="8" height="9" fill="#8ea4f2"/><rect x="3" y="5" width="3.200" height="7" fill="#8ea4f2"/><g fill="#fff"><rect x="4" y="6" width="2" height="1"/><rect x="7" y="6" width="1.200" height="1"/><rect x="9" y="6" width="1.200" height="1"/><rect x="4" y="8" width="2" height="1"/><rect x="7" y="8" width="1.200" height="1"/><rect x="9" y="8" width="1.200" height="1"/><rect x="4" y="10" width="2" height="1"/><rect x="7" y="10" width="1.200" height="1"/><rect x="9" y="10" width="1.200" height="1"/><rect x="7" y="4" width="1.200" height="1"/><rect x="9" y="4" width="1.200" height="1"/><rect x="11" y="4" width="2" height="1"/></g><path d="M7.500 14.600c-.2-2.200 1.100-3.700 2.700-3.700l2.300 1.300 2.300-1.300c1.600 0 2.900 1.500 2.700 3.700z" fill="#f4bc1a" stroke="#96280e" stroke-width=".9" stroke-linejoin="round"/><path d="M12.500 12.300v2.300" stroke="#96280e" stroke-width=".9"/><circle cx="12.550" cy="7.900" r="2.150" fill="#dfa45e" stroke="#8c4a16" stroke-width="1"/></svg>
<span class="t" style="left:50.4px;top:527.84px;font-size:12px;color:#000;transform:scaleX(0.8929);">Contact Manager</span>
<div class="hd" style="left:21px;top:551px;width:8px"></div>
<svg style="left:29px;top:544px" width="18" height="16" viewBox="0 0 18 16"><circle cx="6.050" cy="10.700" r="4.100" fill="#cde6bb"/><circle cx="12.200" cy="5.300" r="3.700" fill="#4a9636"/><circle cx="6.050" cy="1.600" r="2.500" fill="#0c522a"/><circle cx="3.600" cy="5.300" r="1.600" fill="#9cbc2a"/><circle cx="8.500" cy="5.300" r="1.500" fill="#93b82c"/></svg>
<span class="t" style="left:50.4px;top:543.84px;font-size:12px;color:#000;transform:scaleX(0.8635);">Symfonia</span>
<div style="left:251px;top:79px;width:16px;height:494px;background:repeating-conic-gradient(#fff 0 25%,#f0f0f0 0 50%) 0 0/2px 2px"></div>
<div class="sb" style="left:251px;top:79px"><svg style="left:3px;top:5px" width="7" height="4" viewBox="0 0 7 4" shape-rendering="crispEdges"><path d="M3 0h1v1H3zM2 1h3v1H2zM1 2h5v1H1zM0 3h7v1H0z" fill="#000"/></svg></div>
<div class="sb" style="left:251px;top:556px"><svg style="left:3px;top:5px" width="7" height="4" viewBox="0 0 7 4" shape-rendering="crispEdges"><path d="M0 0h7v1H0zM1 1h5v1H1zM2 2h3v1H2zM3 3h1v1H3z" fill="#000"/></svg></div>
<div class="sb" style="left:251px;top:214px;height:342px"></div>
<div class="hc" style="left:273px;width:61px"></div>
<span class="t" style="left:278.4px;top:59.84px;font-size:12px;color:#000;transform:scaleX(0.9538);">Typ</span>
<div class="hc" style="left:335px;width:249px"></div>
<span class="t" style="left:340.4px;top:59.84px;font-size:12px;color:#000;transform:scaleX(0.9186);">Nazwa</span>
<div class="hc" style="left:585px;width:220px"></div>
<span class="t" style="left:589.4px;top:59.84px;font-size:12px;color:#000;transform:scaleX(0.8850);">Opis</span>
<div class="hc" style="left:807px;width:79px"></div>
<span class="t" style="left:811.9px;top:59.84px;font-size:12px;color:#000;transform:scaleX(0.9308);">Netto/Brutto</span>
<div class="hc" style="left:887px;width:125px"></div>
<span class="t" style="left:892.4px;top:59.84px;font-size:12px;color:#000;transform:scaleX(0.8831);">Powiązanie</span>
<div style="left:274px;top:78px;width:737px;height:19px;background:#d4e5fa"></div>
<div class="cb" style="left:277px;top:81px"><svg style="left:2px;top:2px" width="7" height="7" viewBox="0 0 7 7" shape-rendering="crispEdges"><path d="M0 2h1v3H0zM1 3h1v3H1zM2 4h1v3H2zM3 3h1v3H3zM4 2h1v3H4zM5 1h1v3H5zM6 0h1v3H6z" fill="#000"/></svg></div>
<svg style="left:295px;top:79px" width="16" height="16" viewBox="0 0 16 16"><circle cx="8" cy="8" r="7.200" fill="url(#gA)" stroke="#444" stroke-width="1.200"/><text x="8" y="11.500" text-anchor="middle" font-family="Liberation Sans" font-weight="bold" font-size="10.200" fill="#404040" fill-opacity=".6" transform="translate(8 0) scale(.9 1) translate(-8 0)">A</text></svg>
<span class="t" style="left:338.4px;top:79.84px;font-size:12px;color:#000;transform:scaleX(0.8770);">typ A</span>
<span class="t" style="left:810.4px;top:79.84px;font-size:12px;color:#000;transform:scaleX(0.9097);">NETTO</span>
<div class="cb" style="left:277px;top:100px"><svg style="left:2px;top:2px" width="7" height="7" viewBox="0 0 7 7" shape-rendering="crispEdges"><path d="M0 2h1v3H0zM1 3h1v3H1zM2 4h1v3H2zM3 3h1v3H3zM4 2h1v3H4zM5 1h1v3H5zM6 0h1v3H6z" fill="#000"/></svg></div>
<svg style="left:295px;top:98px" width="16" height="16" viewBox="0 0 16 16"><circle cx="8" cy="8" r="7.200" fill="url(#gB)" stroke="#444" stroke-width="1.200"/><text x="8" y="11.500" text-anchor="middle" font-family="Liberation Sans" font-weight="bold" font-size="10.200" fill="#404040" fill-opacity=".6" transform="translate(8 0) scale(.9 1) translate(-8 0)">B</text></svg>
<span class="t" style="left:338.4px;top:98.84px;font-size:12px;color:#000;transform:scaleX(0.8770);">typ B</span>
<span class="t" style="left:810.4px;top:98.84px;font-size:12px;color:#000;transform:scaleX(0.9097);">NETTO</span>
<div class="cb" style="left:277px;top:119px"><svg style="left:2px;top:2px" width="7" height="7" viewBox="0 0 7 7" shape-rendering="crispEdges"><path d="M0 2h1v3H0zM1 3h1v3H1zM2 4h1v3H2zM3 3h1v3H3zM4 2h1v3H4zM5 1h1v3H5zM6 0h1v3H6z" fill="#000"/></svg></div>
<svg style="left:295px;top:117px" width="16" height="16" viewBox="0 0 16 16"><circle cx="8" cy="8" r="7.200" fill="url(#gC)" stroke="#444" stroke-width="1.200"/><text x="8" y="11.500" text-anchor="middle" font-family="Liberation Sans" font-weight="bold" font-size="10.200" fill="#404040" fill-opacity=".6" transform="translate(8 0) scale(.9 1) translate(-8 0)">C</text></svg>
<span class="t" style="left:338.4px;top:117.84px;font-size:12px;color:#000;transform:scaleX(0.8770);">typ C</span>
<span class="t" style="left:810.4px;top:117.84px;font-size:12px;color:#000;transform:scaleX(0.9097);">NETTO</span>
<div class="cb" style="left:277px;top:138px"><svg style="left:2px;top:2px" width="7" height="7" viewBox="0 0 7 7" shape-rendering="crispEdges"><path d="M0 2h1v3H0zM1 3h1v3H1zM2 4h1v3H2zM3 3h1v3H3zM4 2h1v3H4zM5 1h1v3H5zM6 0h1v3H6z" fill="#000"/></svg></div>
<svg style="left:295px;top:136px" width="16" height="16" viewBox="0 0 16 16"><circle cx="8" cy="8" r="7.200" fill="url(#gD)" stroke="#444" stroke-width="1.200"/><text x="8" y="11.500" text-anchor="middle" font-family="Liberation Sans" font-weight="bold" font-size="10.200" fill="#404040" fill-opacity=".6" transform="translate(8 0) scale(.9 1) translate(-8 0)">D</text></svg>
<span class="t" style="left:338.4px;top:136.84px;font-size:12px;color:#000;transform:scaleX(0.8770);">typ D</span>
<span class="t" style="left:810.4px;top:136.84px;font-size:12px;color:#000;transform:scaleX(0.8997);">BRUTTO</span>
<div class="cb" style="left:277px;top:157px"></div>
<svg style="left:295px;top:155px" width="16" height="16" viewBox="0 0 16 16"><circle cx="8" cy="8" r="7.200" fill="url(#gE)" stroke="#444" stroke-width="1.200"/><text x="8" y="11.500" text-anchor="middle" font-family="Liberation Sans" font-weight="bold" font-size="10.200" fill="#404040" fill-opacity=".6" transform="translate(8 0) scale(.9 1) translate(-8 0)">E</text></svg>
<span class="t" style="left:338.4px;top:155.84px;font-size:12px;color:#000;transform:scaleX(0.8770);">typ E</span>
<span class="t" style="left:810.4px;top:155.84px;font-size:12px;color:#000;transform:scaleX(0.9097);">NETTO</span>
<div class="cb" style="left:277px;top:176px"></div>
<svg style="left:295px;top:174px" width="16" height="16" viewBox="0 0 16 16"><circle cx="8" cy="8" r="7.200" fill="url(#gF)" stroke="#444" stroke-width="1.200"/><text x="8" y="11.500" text-anchor="middle" font-family="Liberation Sans" font-weight="bold" font-size="10.200" fill="#404040" fill-opacity=".6" transform="translate(8 0) scale(.9 1) translate(-8 0)">F</text></svg>
<span class="t" style="left:338.4px;top:174.84px;font-size:12px;color:#000;transform:scaleX(0.8770);">typ F</span>
<span class="t" style="left:810.4px;top:174.84px;font-size:12px;color:#000;transform:scaleX(0.9097);">NETTO</span>
<div class="cb" style="left:277px;top:195px"></div>
<svg style="left:295px;top:193px" width="16" height="16" viewBox="0 0 16 16"><circle cx="8" cy="8" r="7.200" fill="url(#gG)" stroke="#444" stroke-width="1.200"/><text x="8" y="11.500" text-anchor="middle" font-family="Liberation Sans" font-weight="bold" font-size="10.200" fill="#404040" fill-opacity=".6" transform="translate(8 0) scale(.9 1) translate(-8 0)">G</text></svg>
<span class="t" style="left:338.4px;top:193.84px;font-size:12px;color:#000;transform:scaleX(0.8770);">typ G</span>
<span class="t" style="left:810.4px;top:193.84px;font-size:12px;color:#000;transform:scaleX(0.9097);">NETTO</span>
<div class="cb" style="left:277px;top:214px"></div>
<svg style="left:295px;top:212px" width="16" height="16" viewBox="0 0 16 16"><circle cx="8" cy="8" r="7.200" fill="url(#gH)" stroke="#444" stroke-width="1.200"/><text x="8" y="11.500" text-anchor="middle" font-family="Liberation Sans" font-weight="bold" font-size="10.200" fill="#404040" fill-opacity=".6" transform="translate(8 0) scale(.9 1) translate(-8 0)">H</text></svg>
<span class="t" style="left:338.4px;top:212.84px;font-size:12px;color:#000;transform:scaleX(0.8770);">typ H</span>
<span class="t" style="left:810.4px;top:212.84px;font-size:12px;color:#000;transform:scaleX(0.9097);">NETTO</span>
<div class="cb" style="left:277px;top:233px"></div>
<svg style="left:295px;top:231px" width="16" height="16" viewBox="0 0 16 16"><circle cx="8" cy="8" r="7.200" fill="url(#gI)" stroke="#444" stroke-width="1.200"/><text x="8" y="11.500" text-anchor="middle" font-family="Liberation Sans" font-weight="bold" font-size="10.200" fill="#404040" fill-opacity=".6" transform="translate(8 0) scale(.9 1) translate(-8 0)">I</text></svg>
<span class="t" style="left:338.4px;top:231.84px;font-size:12px;color:#000;transform:scaleX(0.8770);">typ I</span>
<span class="t" style="left:810.4px;top:231.84px;font-size:12px;color:#000;transform:scaleX(0.9097);">NETTO</span>
<div class="cb" style="left:277px;top:252px"></div>
<svg style="left:295px;top:250px" width="16" height="16" viewBox="0 0 16 16"><circle cx="8" cy="8" r="7.200" fill="url(#gJ)" stroke="#444" stroke-width="1.200"/><text x="8" y="11.500" text-anchor="middle" font-family="Liberation Sans" font-weight="bold" font-size="10.200" fill="#404040" fill-opacity=".6" transform="translate(8 0) scale(.9 1) translate(-8 0)">J</text></svg>
<span class="t" style="left:338.4px;top:250.84px;font-size:12px;color:#000;transform:scaleX(0.8770);">typ J</span>
<span class="t" style="left:810.4px;top:250.84px;font-size:12px;color:#000;transform:scaleX(0.9097);">NETTO</span>
<div class="cb" style="left:277px;top:271px"></div>
<svg style="left:295px;top:269px" width="16" height="16" viewBox="0 0 16 16"><circle cx="8" cy="8" r="7.200" fill="url(#gK)" stroke="#444" stroke-width="1.200"/><text x="8" y="11.500" text-anchor="middle" font-family="Liberation Sans" font-weight="bold" font-size="10.200" fill="#404040" fill-opacity=".6" transform="translate(8 0) scale(.9 1) translate(-8 0)">K</text></svg>
<span class="t" style="left:338.4px;top:269.84px;font-size:12px;color:#000;transform:scaleX(0.8770);">typ K</span>
<span class="t" style="left:810.4px;top:269.84px;font-size:12px;color:#000;transform:scaleX(0.9097);">NETTO</span>
<div class="cb" style="left:277px;top:290px"></div>
<svg style="left:295px;top:288px" width="16" height="16" viewBox="0 0 16 16"><circle cx="8" cy="8" r="7.200" fill="url(#gL)" stroke="#444" stroke-width="1.200"/><text x="8" y="11.500" text-anchor="middle" font-family="Liberation Sans" font-weight="bold" font-size="10.200" fill="#404040" fill-opacity=".6" transform="translate(8 0) scale(.9 1) translate(-8 0)">L</text></svg>
<span class="t" style="left:338.4px;top:288.84px;font-size:12px;color:#000;transform:scaleX(0.8770);">typ L</span>
<span class="t" style="left:810.4px;top:288.84px;font-size:12px;color:#000;transform:scaleX(0.9097);">NETTO</span>
<div class="cb" style="left:277px;top:309px"></div>
<svg style="left:295px;top:307px" width="16" height="16" viewBox="0 0 16 16"><circle cx="8" cy="8" r="7.200" fill="url(#gM)" stroke="#444" stroke-width="1.200"/><text x="8" y="11.500" text-anchor="middle" font-family="Liberation Sans" font-weight="bold" font-size="10.200" fill="#404040" fill-opacity=".6" transform="translate(8 0) scale(.9 1) translate(-8 0)">M</text></svg>
<span class="t" style="left:338.4px;top:307.84px;font-size:12px;color:#000;transform:scaleX(0.8770);">typ M</span>
<span class="t" style="left:810.4px;top:307.84px;font-size:12px;color:#000;transform:scaleX(0.9097);">NETTO</span>
<div class="cb" style="left:277px;top:328px"></div>
<svg style="left:295px;top:326px" width="16" height="16" viewBox="0 0 16 16"><circle cx="8" cy="8" r="7.200" fill="url(#gN)" stroke="#444" stroke-width="1.200"/><text x="8" y="11.500" text-anchor="middle" font-family="Liberation Sans" font-weight="bold" font-size="10.200" fill="#404040" fill-opacity=".6" transform="translate(8 0) scale(.9 1) translate(-8 0)">N</text></svg>
<span class="t" style="left:338.4px;top:326.84px;font-size:12px;color:#000;transform:scaleX(0.8770);">typ N</span>
<span class="t" style="left:810.4px;top:326.84px;font-size:12px;color:#000;transform:scaleX(0.9097);">NETTO</span>
<div class="cb" style="left:277px;top:347px"></div>
<svg style="left:295px;top:345px" width="16" height="16" viewBox="0 0 16 16"><circle cx="8" cy="8" r="7.200" fill="url(#gO)" stroke="#444" stroke-width="1.200"/><text x="8" y="11.500" text-anchor="middle" font-family="Liberation Sans" font-weight="bold" font-size="10.200" fill="#404040" fill-opacity=".6" transform="translate(8 0) scale(.9 1) translate(-8 0)">O</text></svg>
<span class="t" style="left:338.4px;top:345.84px;font-size:12px;color:#000;transform:scaleX(0.8770);">typ O</span>
<span class="t" style="left:810.4px;top:345.84px;font-size:12px;color:#000;transform:scaleX(0.9097);">NETTO</span>
<div class="cb" style="left:277px;top:366px"></div>
<svg style="left:295px;top:364px" width="16" height="16" viewBox="0 0 16 16"><circle cx="8" cy="8" r="7.200" fill="url(#gP)" stroke="#444" stroke-width="1.200"/><text x="8" y="11.500" text-anchor="middle" font-family="Liberation Sans" font-weight="bold" font-size="10.200" fill="#404040" fill-opacity=".6" transform="translate(8 0) scale(.9 1) translate(-8 0)">P</text></svg>
<span class="t" style="left:338.4px;top:364.84px;font-size:12px;color:#000;transform:scaleX(0.8770);">typ P</span>
<span class="t" style="left:810.4px;top:364.84px;font-size:12px;color:#000;transform:scaleX(0.9097);">NETTO</span>
<div class="cb" style="left:277px;top:385px"></div>
<svg style="left:295px;top:383px" width="16" height="16" viewBox="0 0 16 16"><circle cx="8" cy="8" r="7.200" fill="url(#gQ)" stroke="#444" stroke-width="1.200"/><text x="8" y="11.500" text-anchor="middle" font-family="Liberation Sans" font-weight="bold" font-size="10.200" fill="#404040" fill-opacity=".32" transform="translate(8 0) scale(.9 1) translate(-8 0)">Q</text></svg>
<span class="t" style="left:338.4px;top:383.84px;font-size:12px;color:#000;transform:scaleX(0.8770);">typ Q</span>
<span class="t" style="left:810.4px;top:383.84px;font-size:12px;color:#000;transform:scaleX(0.9097);">NETTO</span>
<div class="cb" style="left:277px;top:404px"></div>
<svg style="left:295px;top:402px" width="16" height="16" viewBox="0 0 16 16"><circle cx="8" cy="8" r="7.200" fill="url(#gR)" stroke="#444" stroke-width="1.200"/><text x="8" y="11.500" text-anchor="middle" font-family="Liberation Sans" font-weight="bold" font-size="10.200" fill="#404040" fill-opacity=".6" transform="translate(8 0) scale(.9 1) translate(-8 0)">R</text></svg>
<span class="t" style="left:338.4px;top:402.84px;font-size:12px;color:#000;transform:scaleX(0.8770);">typ R</span>
<span class="t" style="left:810.4px;top:402.84px;font-size:12px;color:#000;transform:scaleX(0.9097);">NETTO</span>
<div class="cb" style="left:277px;top:423px"></div>
<svg style="left:295px;top:421px" width="16" height="16" viewBox="0 0 16 16"><circle cx="8" cy="8" r="7.200" fill="url(#gS)" stroke="#444" stroke-width="1.200"/><text x="8" y="11.500" text-anchor="middle" font-family="Liberation Sans" font-weight="bold" font-size="10.200" fill="#404040" fill-opacity=".6" transform="translate(8 0) scale(.9 1) translate(-8 0)">S</text></svg>
<span class="t" style="left:338.4px;top:421.84px;font-size:12px;color:#000;transform:scaleX(0.8770);">typ S</span>
<span class="t" style="left:810.4px;top:421.84px;font-size:12px;color:#000;transform:scaleX(0.9097);">NETTO</span>
<div class="cb" style="left:277px;top:442px"></div>
<svg style="left:295px;top:440px" width="16" height="16" viewBox="0 0 16 16"><circle cx="8" cy="8" r="7.200" fill="url(#gT)" stroke="#444" stroke-width="1.200"/><text x="8" y="11.500" text-anchor="middle" font-family="Liberation Sans" font-weight="bold" font-size="10.200" fill="#404040" fill-opacity=".6" transform="translate(8 0) scale(.9 1) translate(-8 0)">T</text></svg>
<span class="t" style="left:338.4px;top:440.84px;font-size:12px;color:#000;transform:scaleX(0.8770);">typ T</span>
<span class="t" style="left:810.4px;top:440.84px;font-size:12px;color:#000;transform:scaleX(0.9097);">NETTO</span>
</body></html>
